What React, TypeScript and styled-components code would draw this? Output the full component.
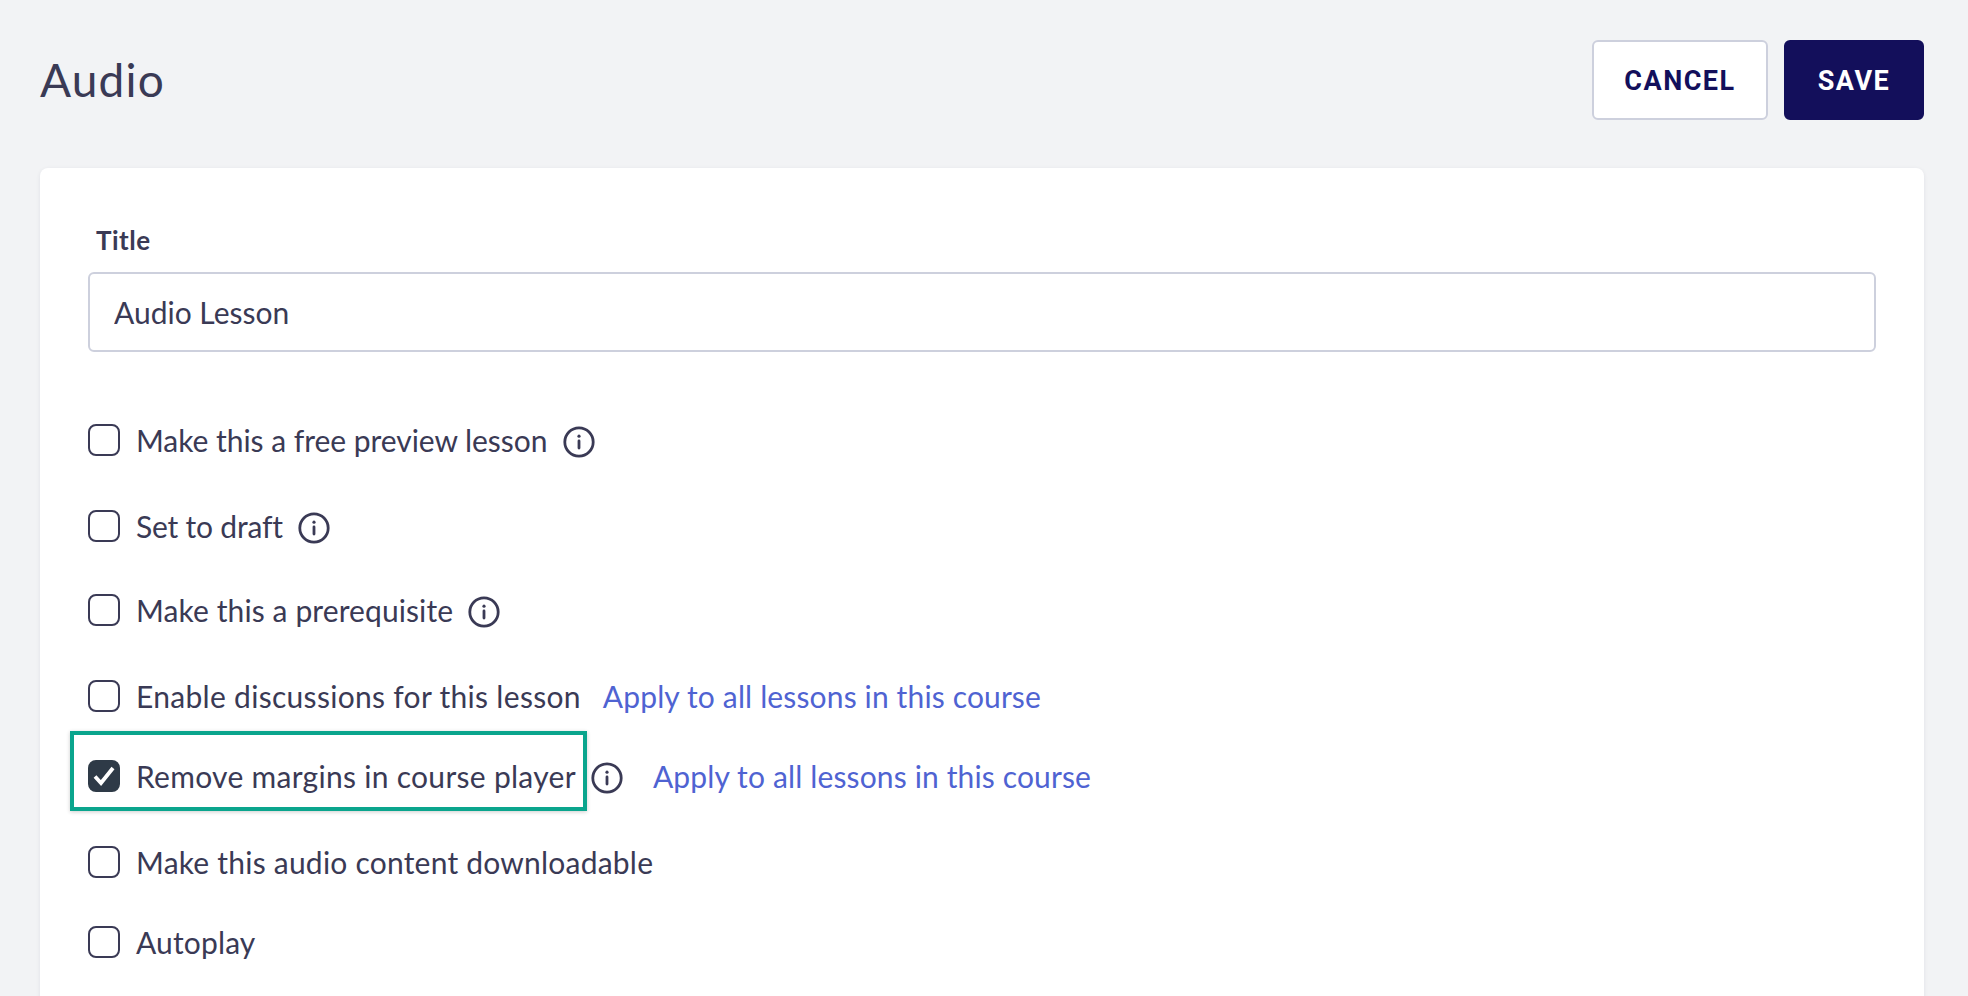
import React, { FC } from 'react'
import styled, { createGlobalStyle } from 'styled-components'

const GlobalStyle = createGlobalStyle`
  html, body {
    margin: 0;
    padding: 0;
    height: 100%;
    background: #f2f3f5;
    overflow: hidden;
  }
`

const Page = styled.div`
  height: 996px;
  overflow: hidden;
  box-sizing: border-box;
  padding: 40px 44px 0 40px;
  font-family: Lato, "Noto Sans", sans-serif;
  color: #3a3a55;
`

const Header = styled.header`
  display: flex;
  align-items: center;
  justify-content: space-between;
  height: 80px;
  margin-bottom: 48px;
`

const Heading = styled.h1`
  margin: 0;
  font-size: 46px;
  font-weight: 400;
  line-height: 1;
  letter-spacing: 1.2px;
`

const Actions = styled.div`
  display: flex;
  gap: 16px;
`

const Button = styled.button<{ $primary?: boolean }>`
  box-sizing: border-box;
  width: ${(p) => (p.$primary ? '140px' : '176px')};
  height: 80px;
  padding-top: 2px;
  border-radius: 6px;
  border: 2px solid ${(p) => (p.$primary ? '#130f5b' : '#cdd0dd')};
  background: ${(p) => (p.$primary ? '#130f5b' : '#fff')};
  color: ${(p) => (p.$primary ? '#fff' : '#130f5b')};
  font-family: Roboto, sans-serif;
  font-size: 27px;
  font-weight: 700;
  letter-spacing: 1.5px;
`

const Card = styled.section`
  background: #fff;
  border-radius: 8px;
  box-shadow: 0 1px 4px rgba(30, 30, 60, 0.08);
  padding: 56px 48px 120px;
`

const FieldLabel = styled.label`
  display: block;
  margin: 0 0 16px 8px;
  font-size: 26px;
  font-weight: 700;
  line-height: 32px;
  letter-spacing: 0.5px;
`

const TextInput = styled.input`
  display: block;
  box-sizing: border-box;
  width: 100%;
  height: 80px;
  padding: 0 24px;
  border: 2px solid #cdd0dd;
  border-radius: 6px;
  font: inherit;
  font-size: 30px;
  color: #3a3a55;
  outline: none;
`

const Options = styled.div`
  margin-top: 72px;
`

const Row = styled.div<{ $top?: number }>`
  position: relative;
  display: flex;
  align-items: center;
  height: 32px;
  margin-top: ${(p) => p.$top ?? 0}px;
  font-size: 30px;
`

const Box = styled.span<{ $checked?: boolean }>`
  box-sizing: border-box;
  flex: none;
  display: flex;
  align-items: center;
  justify-content: center;
  width: 32px;
  height: 32px;
  margin-right: 16px;
  border: 2px solid ${(p) => (p.$checked ? '#2e3a47' : '#3a3a55')};
  border-radius: 8px;
  background: ${(p) => (p.$checked ? '#2e3a47' : '#fff')};
`

const OptionLabel = styled.span<{ $tracking: number }>`
  letter-spacing: ${(p) => p.$tracking}px;
`

const InfoIcon = styled.svg<{ $left: number }>`
  flex: none;
  width: 32px;
  height: 32px;
  margin-top: 4px;
  margin-left: ${(p) => p.$left}px;
`

const ApplyLink = styled.a<{ $left: number }>`
  margin-left: ${(p) => p.$left}px;
  color: #4f63d2;
  text-decoration: none;
  letter-spacing: 0.14px;
`

const Highlight = styled.div`
  position: absolute;
  left: -18px;
  top: -29px;
  width: 517px;
  height: 80px;
  box-sizing: border-box;
  border: 4px solid #0aa58d;
  box-shadow: 0 1px 4px rgba(0, 0, 0, 0.2);
`

const Info: FC<{ left: number }> = ({ left }) => (
  <InfoIcon $left={left} viewBox="0 0 32 32" fill="none" stroke="#3a3a55" strokeWidth="2.8">
    <circle cx="16" cy="16" r="14.2" />
    <path d="M16 15v7" strokeLinecap="round" />
    <circle cx="16" cy="10.2" r="1.6" fill="#3a3a55" stroke="none" />
  </InfoIcon>
)

const Check = () => (
  <svg width="26" height="26" viewBox="0 0 26 26" fill="none" stroke="#fff" strokeWidth="3.8">
    <path d="M4 13.5l6 6.5L22 5" />
  </svg>
)

type Option = {
  label: string
  top: number
  tracking: number
  checked?: boolean
  info?: number
  apply?: number
  highlight?: boolean
}

const options: Option[] = [
  { label: 'Make this a free preview lesson', top: 0, tracking: -0.04, info: 16 },
  { label: 'Set to draft', top: 54, tracking: -0.2, info: 15 },
  { label: 'Make this a prerequisite', top: 52, tracking: 0.1, info: 15 },
  { label: 'Enable discussions for this lesson', top: 54, tracking: 0.3, apply: 22 },
  { label: 'Remove margins in course player', top: 48, tracking: 0.29, checked: true, info: 15, apply: 30, highlight: true },
  { label: 'Make this audio content downloadable', top: 54, tracking: 0.22 },
  { label: 'Autoplay', top: 48, tracking: 0.15 },
]

export default function App() {
  return (
    <Page>
      <GlobalStyle />
      <Header>
        <Heading>Audio</Heading>
        <Actions>
          <Button>CANCEL</Button>
          <Button $primary>SAVE</Button>
        </Actions>
      </Header>
      <Card>
        <FieldLabel>Title</FieldLabel>
        <TextInput defaultValue="Audio Lesson" />
        <Options>
          {options.map((option) => (
            <Row key={option.label} $top={option.top}>
              {option.highlight && <Highlight />}
              <Box $checked={option.checked}>{option.checked && <Check />}</Box>
              <OptionLabel $tracking={option.tracking}>{option.label}</OptionLabel>
              {option.info !== undefined && <Info left={option.info} />}
              {option.apply !== undefined && (
                <ApplyLink $left={option.apply} href="#">Apply to all lessons in this course</ApplyLink>
              )}
            </Row>
          ))}
        </Options>
      </Card>
    </Page>
  )
}
